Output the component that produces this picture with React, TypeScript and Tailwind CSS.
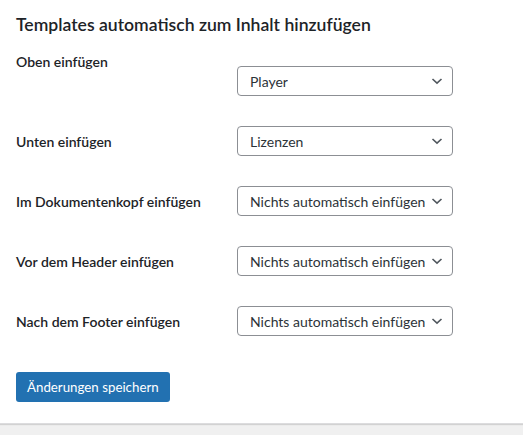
import React from "react";

const rows = [
  { label: "Oben einfügen", value: "Player", top: true },
  { label: "Unten einfügen", value: "Lizenzen" },
  { label: "Im Dokumentenkopf einfügen", value: "Nichts automatisch einfügen" },
  { label: "Vor dem Header einfügen", value: "Nichts automatisch einfügen" },
  { label: "Nach dem Footer einfügen", value: "Nichts automatisch einfügen" },
];

function Chevron() {
  return (
    <svg width="12" height="12" viewBox="0 0 12 12" className="shrink-0 text-[#50575e]">
      <path d="M1.5 4 L6 8.2 L10.5 4" fill="none" stroke="currentColor" strokeWidth="1.6" />
    </svg>
  );
}

export default function App() {
  return (
    <div
      className="w-[523px] h-[435px] flex flex-col bg-[#f0f0f0] text-[#1d2327]"
      style={{ fontFamily: 'Lato, "Open Sans", sans-serif' }}
    >
      <div className="bg-white pl-4 pt-[13px] pb-[21px] shadow-[0_1px_1px_rgba(0,0,0,0.12)] border-b border-[#dcdcde]">
        <h2 className="text-[17.6px] leading-[24px] font-semibold">Templates automatisch zum Inhalt hinzufügen</h2>
        <div className="mt-[14px] flex flex-col">
          {rows.map((r) => (
            <div key={r.label} className="flex items-center h-[60px]">
              <div
                className={
                  "w-[221px] text-[14px] leading-[20px] font-semibold " +
                  (r.top ? "self-start mt-[1px]" : "mt-[2px]")
                }
              >
                {r.label}
              </div>
              <div className="w-[216px] h-[30px] border border-[#8c8f94] rounded-[4px] flex items-center justify-between pl-3 pr-[9px] text-[14px] text-[#2c3338]">
                <span className="whitespace-nowrap overflow-hidden">{r.value}</span>
                <Chevron />
              </div>
            </div>
          ))}
        </div>
        <button className="mt-[21px] h-[30px] px-[11px] rounded-[3px] bg-[#2271b1] text-white text-[13.3px] leading-[28px]">
          Änderungen speichern
        </button>
      </div>
    </div>
  );
}
